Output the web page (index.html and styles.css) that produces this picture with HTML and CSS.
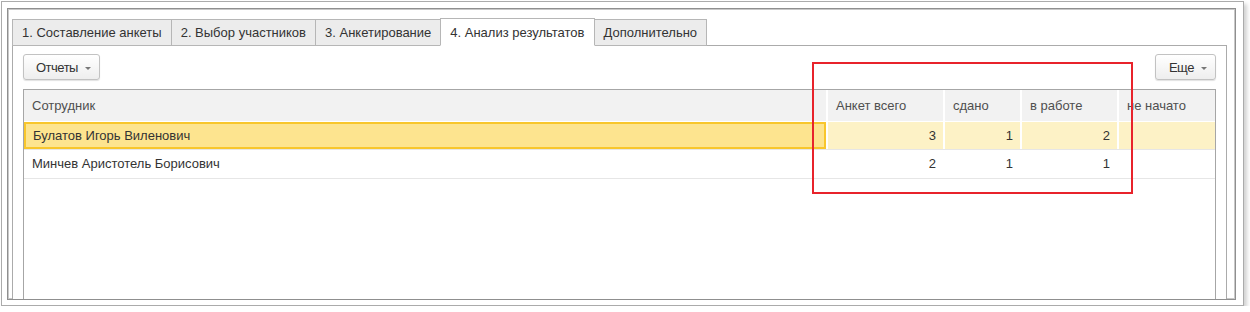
FILE: index.html
```html
<!DOCTYPE html>
<html lang="ru">
<head>
  <meta charset="UTF-8">
  <title>Анализ результатов</title>
  <link rel="stylesheet" href="styles.css">
</head>
<body>
  <div class="shot">
    <div class="window">
      <div class="tabs">
        <div class="tab">1. Составление анкеты</div>
        <div class="tab">2. Выбор участников</div>
        <div class="tab">3. Анкетирование</div>
        <div class="tab active">4. Анализ результатов</div>
        <div class="tab">Дополнительно</div>
      </div>

      <div class="panel">
        <div class="toolbar">
          <button class="btn">Отчеты <span class="caret"></span></button>
          <button class="btn btn-more">Еще <span class="caret"></span></button>
        </div>

        <div class="grid">
          <div class="grid-row head">
            <div class="cell">Сотрудник</div>
            <div class="cell">Анкет всего</div>
            <div class="cell">сдано</div>
            <div class="cell">в работе</div>
            <div class="cell">не начато</div>
          </div>
          <div class="grid-row selected">
            <div class="cell current">Булатов Игорь Виленович</div>
            <div class="cell num">3</div>
            <div class="cell num">1</div>
            <div class="cell num">2</div>
            <div class="cell num"></div>
          </div>
          <div class="grid-row">
            <div class="cell">Минчев Аристотель Борисович</div>
            <div class="cell num">2</div>
            <div class="cell num">1</div>
            <div class="cell num">1</div>
            <div class="cell num"></div>
          </div>
        </div>
      </div>
    </div>

    <!-- highlight frame drawn over the table -->
    <div class="mark"></div>
  </div>
</body>
</html>
```

FILE: styles.css
```css
body {
  margin: 0;
  background: #fff;
  font-family: "Liberation Sans", Arial, sans-serif;
  font-size: 13px;
  color: #333;
}
.shot {
  position: relative;
  box-sizing: border-box;
  width: 1243px;
  height: 305px;
  margin: 1px 0 0 1px;
  padding: 6px 7px 5px 5px;
  border: 1px solid #ababab;
  background: #fff;
  box-shadow: 3px 3px 4px rgba(0, 0, 0, 0.18);
}
.window {
  box-sizing: border-box;
  height: 100%;
  padding: 9px 8px 0 4px;
  border: 1px solid #8f8f8f;
  box-shadow: inset 0 0 0 1px #c8c8c8;
  display: flex;
  flex-direction: column;
  overflow: hidden;
}

/* tabs */
.tabs {
  display: flex;
  align-items: flex-end;
  position: relative;
  z-index: 1;
  margin-bottom: -1px;
}
.tab {
  box-sizing: border-box;
  height: 27px;
  line-height: 26px;
  padding: 0 9px;
  border: 1px solid #b6b6b6;
  background: #ececec;
  white-space: nowrap;
}
.tab + .tab {
  margin-left: -1px;
}
.tab.active {
  position: relative;
  height: 28px;
  line-height: 27px;
  background: #fff;
  border-bottom-color: #fff;
}

/* panel */
.panel {
  flex: 1;
  display: flex;
  flex-direction: column;
  padding: 8px 10px 0 10px;
  border: 1px solid #ababab;
  border-bottom: 0;
  background: #fff;
}
.toolbar {
  display: flex;
  justify-content: space-between;
  margin-bottom: 9px;
}
.btn {
  box-sizing: border-box;
  height: 26px;
  padding: 0 8px 0 12px;
  border: 1px solid #c2c2c2;
  border-radius: 3px;
  background: linear-gradient(#ffffff, #eeeeee);
  box-shadow: 0 1px 1px rgba(0, 0, 0, 0.12);
  font-family: inherit;
  font-size: 13px;
  letter-spacing: -0.5px;
  color: #333;
}
.btn-more {
  padding-left: 13px;
}
.caret {
  display: inline-block;
  vertical-align: middle;
  margin-left: 4px;
  border-left: 3px solid transparent;
  border-right: 3px solid transparent;
  border-top: 3px solid #777;
}

/* table */
.grid {
  flex: 1;
  border: 1px solid #a6a6a6;
  border-bottom: 0;
}
.grid-row {
  display: grid;
  grid-template-columns: 802px 117px 77px 97px 1fr;
  height: 28px;
  border-bottom: 1px solid #e6e6e6;
}
.cell {
  box-sizing: border-box;
  padding: 0 8px;
  line-height: 27px;
  white-space: nowrap;
  overflow: hidden;
}
.cell + .cell {
  border-left: 2px solid #fff;
}
.num {
  text-align: right;
  padding-right: 7px;
}
.head {
  height: 31px;
  background: #f2f2f2;
  border-bottom: 1px solid #fff;
  color: #4f4f4f;
}
.head .cell {
  line-height: 31px;
}
.selected {
  height: 27px;
  background: #fdf2c6;
}
.selected .cell {
  line-height: 27px;
}
.selected .current {
  background: #fde48f;
  border: 2px solid #f8c62c;
  line-height: 23px;
  padding-left: 7px;
}

/* red highlight frame */
.mark {
  position: absolute;
  left: 810px;
  top: 60px;
  width: 321px;
  height: 132px;
  box-sizing: border-box;
  border: 2px solid #e8232b;
}
```
